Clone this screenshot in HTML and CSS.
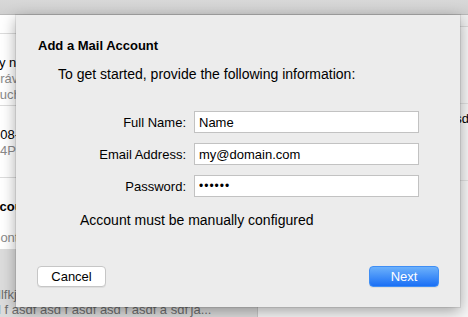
FILE: index.html
```html
<!DOCTYPE html>
<html lang="en">
<head>
    <meta charset="UTF-8">
    <title>Add a Mail Account</title>
    <link rel="stylesheet" href="styles.css">
</head>
<body>
    <div class="window">
        <div class="toolbar"></div>

        <div class="main">
            <div class="list">
                <div class="row row-top"></div>
                <div class="row">
                    <div class="row-title cut-17">Any news</div>
                    <div class="row-sub cut-15">Zpráva</div>
                    <div class="row-sub cut-14">Touch</div>
                </div>
                <div class="row">
                    <div class="row-title cut-33">2015-08-14</div>
                    <div class="row-sub cut-18">2:14PM</div>
                </div>
                <div class="row">
                    <div class="row-title bold cut-17">Account</div>
                    <div class="row-sub spaced cut-9">Contents</div>
                </div>
                <div class="row row-selected">
                    <div class="row-sub">llfkj</div>
                    <div class="row-sub">l f asdf asd f asdf asd f asdf a sdf'ja...</div>
                </div>
            </div>

            <div class="pane">
                <div class="pane-head"></div>
                <div class="pane-row"></div>
                <div class="pane-row"><span class="pane-text">asdfj</span></div>
            </div>
        </div>

        <div class="sheet">
            <h1>Add a Mail Account</h1>
            <p class="intro">To get started, provide the following information:</p>

            <div class="fields">
                <label>Full Name:</label>
                <input type="text" value="Name">
                <label>Email Address:</label>
                <input type="text" value="my@domain.com">
                <label>Password:</label>
                <input type="password" value="secret">
            </div>

            <p class="note">Account must be manually configured</p>

            <div class="actions">
                <button class="btn">Cancel</button>
                <button class="btn btn-primary">Next</button>
            </div>
        </div>
    </div>
</body>
</html>
```

FILE: styles.css
```css
* {
    margin: 0;
    padding: 0;
    box-sizing: border-box;
    font-family: 'Liberation Sans', Arial, sans-serif;
}

body {
    width: 468px;
    height: 317px;
    overflow: hidden;
    background: #ffffff;
    color: #000000;
    font-size: 13px;
}

.window {
    position: relative;
    width: 468px;
    height: 317px;
    display: flex;
    flex-direction: column;
}

.toolbar {
    height: 15px;
    flex-shrink: 0;
    background: linear-gradient(#d8d8d8, #d0d0d0);
    border-bottom: 1px solid #b8b8b8;
}

.main {
    flex: 1;
    display: flex;
    min-height: 0;
}

.list {
    width: 258px;
    flex-shrink: 0;
    display: flex;
    flex-direction: column;
    border-right: 1px solid #c8c8c8;
    background: #ffffff;
}

.row {
    height: 72px;
    padding: 21px 0 0 0;
    border-bottom: 1px solid #dcdcdc;
    line-height: 16px;
    white-space: nowrap;
    overflow: hidden;
}

.row-top {
    height: 19px;
    padding: 0;
}

.row-title.bold {
    font-weight: bold;
}

.row-sub {
    color: #8a8a8a;
}

/* the list sits under the sheet, only the tail of each line shows */
.cut-9 { margin-left: -9px; }
.cut-14 { margin-left: -14px; }
.cut-15 { margin-left: -15px; }
.cut-17 { margin-left: -17px; }
.cut-18 { margin-left: -18px; }
.cut-33 { margin-left: -33px; }

.row-sub.spaced {
    margin-top: 15px;
}

.row-selected {
    flex: 1;
    height: auto;
    border-bottom: none;
    background: #dcdcdc;
    padding-top: 37px;
    line-height: 15px;
}

.row-selected .row-sub {
    margin-left: -2px;
    color: #6e6e6e;
}

.pane {
    flex: 1;
    background: #f6f6f6;
    display: flex;
    flex-direction: column;
}

.pane-head {
    height: 12px;
    border-bottom: 1px solid #d8d8d8;
    background: #f0f0f0;
}

.pane-row {
    height: 77px;
    border-bottom: 1px solid #e0e0e0;
    white-space: nowrap;
    overflow: hidden;
}

.pane-text {
    display: block;
    margin: 7px 0 0 190px;
}

/* the sheet dropped over the window */
.sheet {
    position: absolute;
    left: 16px;
    top: 15px;
    width: 444px;
    height: 292px;
    background: #ececec;
    box-shadow: 0 4px 14px rgba(0, 0, 0, 0.35), 0 0 0 1px rgba(0, 0, 0, 0.08);
    padding: 23px 21px 20px 21px;
    display: flex;
    flex-direction: column;
}

h1 {
    font-size: 13px;
    font-weight: bold;
    line-height: 16px;
    margin-left: 1px;
}

.intro {
    margin: 12px 0 0 21px;
    font-size: 14px;
    line-height: 16px;
}

.fields {
    display: grid;
    grid-template-columns: 149px 225px;
    column-gap: 8px;
    row-gap: 10px;
    align-items: center;
    margin-top: 29px;
}

.fields label {
    text-align: right;
}

.fields input {
    height: 22px;
    border: 1px solid #c2c2c2;
    background: #ffffff;
    padding: 0 4px;
    font-size: 13px;
    color: #000000;
    outline: none;
}

.fields input[type="password"] {
    font-size: 12px;
    letter-spacing: 1px;
}

.note {
    margin: 15px 0 0 43px;
    font-size: 14px;
    line-height: 16px;
}

.actions {
    margin-top: auto;
    display: flex;
    justify-content: space-between;
}

.btn {
    width: 69px;
    height: 21px;
    font-size: 13px;
    border: 1px solid #c6c6c6;
    border-radius: 4px;
    background: #ffffff;
    color: #000000;
    box-shadow: 0 1px 0 rgba(0, 0, 0, 0.06);
}

.btn-primary {
    width: 70px;
    border: 1px solid #3f8ef5;
    background: linear-gradient(#6cb1fb, #1a6ff5);
    color: #ffffff;
}
```
